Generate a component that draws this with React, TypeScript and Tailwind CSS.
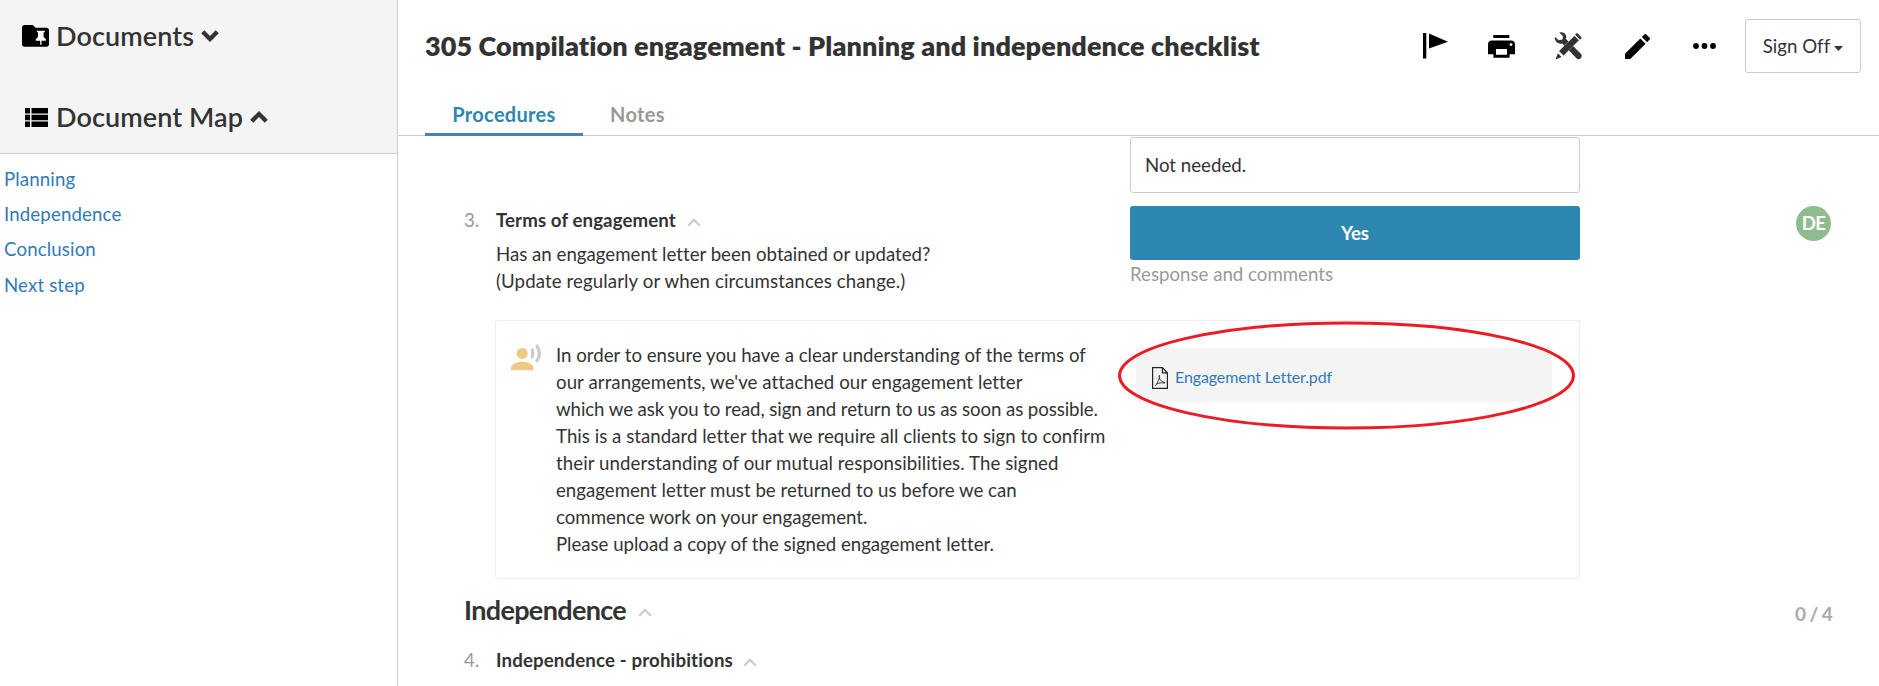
import React from "react";

const navItems = ["Planning", "Independence", "Conclusion", "Next step"];

const letterLines = [
  { text: "In order to ensure you have a clear understanding of the terms of", tracking: "" },
  { text: "our arrangements, we've attached our engagement letter", tracking: "tracking-[0.07px]" },
  { text: "which we ask you to read, sign and return to us as soon as possible.", tracking: "tracking-[-0.09px]" },
  { text: "This is a standard letter that we require all clients to sign to confirm", tracking: "tracking-[0.02px]" },
  { text: "their understanding of our mutual responsibilities. The signed", tracking: "tracking-[0.07px]" },
  { text: "engagement letter must be returned to us before we can", tracking: "" },
  { text: "commence work on your engagement.", tracking: "" },
  { text: "Please upload a copy of the signed engagement letter.", tracking: "tracking-[-0.03px]" },
];

function FolderPinIcon() {
  return (
    <svg className="block h-[22px] w-[27px]" viewBox="0 0 27 22">
      <path fill="#000" d="M2.7 0h8.1l2.7 2.7h10.8A2.7 2.7 0 0 1 27 5.4v13.7a2.7 2.7 0 0 1-2.7 2.7H2.7A2.7 2.7 0 0 1 0 19.1V2.7A2.7 2.7 0 0 1 2.7 0z" />
      <path fill="#fff" d="M14.8 5.8h8v1.400h-1.200v4.900l2.200 2v1.600h-4.300v4h-1.300v-4h-4.400v-1.600l2.200-2V7.200h-1.200z" />
    </svg>
  );
}

function ListIcon() {
  return (
    <svg className="block h-[19px] w-[23px]" viewBox="0 0 23 19" fill="#000">
      <path d="M0 0h5v5.400H0zM6.500 0H23v5.400H6.500zM0 6.800h5v5.400H0zM6.500 6.800H23v5.400H6.500zM0 13.600h5V19H0zM6.500 13.600H23V19H6.500z" />
    </svg>
  );
}

function BoldChevron({ up = false }: { up?: boolean }) {
  return (
    <svg className={up ? "block h-[12px] w-[18px] rotate-180" : "block h-[12px] w-[18px]"} viewBox="0 0 18 12">
      <path fill="#333" d="M3.300.200 9 5.900 14.700.200 17.800 3.300 9 11.900.2 3.300z" />
    </svg>
  );
}

function ThinChevron() {
  return (
    <svg className="mt-[3px] block h-[9px] w-[14px]" viewBox="0 0 14 9">
      <path d="M1.200 7.800 7 1.900l5.800 5.900" fill="none" stroke="#ccc" strokeWidth="2.200" />
    </svg>
  );
}

function FlagIcon() {
  return (
    <svg className="block h-[26px] w-[25px]" viewBox="0 0 25 26" fill="#000">
      <path d="M0 0h3.300v25.500H0zM6 0.500l19 8.200L6 15.500z" />
    </svg>
  );
}

function PrintIcon() {
  return (
    <svg className="block h-[23px] w-[27px]" viewBox="0 0 27 23">
      <path fill="#000" d="M5.300 0h16v3h-16zM4 5.600h19a4 4 0 0 1 4 4v9.600h-5.400v3.500H5.400v-3.500H0V9.600a4 4 0 0 1 4-4z" />
      <path fill="#fff" d="M8 14h11v5.800H8z" />
      <circle cx="23" cy="9.600" r="1.400" fill="#fff" />
    </svg>
  );
}

function ToolsIcon() {
  return (
    <svg className="block h-[28px] w-[27px]" viewBox="0 0 27 28" fill="#333">
      <path d="M4.300.6C6.500-.3 9 .2 10.300 2.200c1 1.500 1.200 3.300.6 4.900l15 14.700c1.200 1.300 1 3.200-.1 4.400-1.300 1.300-3.200 1.200-4.400 0L7.300 11.500C5 12.200 2.500 11.400 1.100 9.600.1 8.300-.3 6.500.2 5l3.600 3.300 3.600-.7.700-3.400z" />
      <path d="M19.500 3.700 24.100 8.300 8.500 23.700 3.900 19.100z" stroke="#fff" strokeWidth=".3" />
      <path d="M2.900 21.200 6.600 24.900 0.500 27.500zM22.800 1.600l3.300 3.300c.6.600.6 1.200.1 1.700l-1.100 1.100-5-5 1-1.100c.5-.5 1.200-.5 1.700 0z" />
    </svg>
  );
}

function PencilIcon() {
  return (
    <svg className="block h-[25px] w-[25px]" viewBox="3 3 18 18" fill="#000">
      <path d="M3 17.250V21h3.750L17.810 9.940l-3.750-3.750L3 17.250zM20.710 7.040a1 1 0 0 0 0-1.410l-2.340-2.340a1 1 0 0 0-1.410 0l-1.830 1.830 3.750 3.750 1.830-1.830z" />
    </svg>
  );
}

function MoreIcon() {
  return (
    <svg className="block h-[6px] w-[23px]" viewBox="0 0 23 6" fill="#000">
      <circle cx="3" cy="3" r="2.900" />
      <circle cx="11.500" cy="3" r="2.900" />
      <circle cx="20" cy="3" r="2.900" />
    </svg>
  );
}

function VoiceIcon() {
  return (
    <svg className="block h-[27px] w-[31px]" viewBox="0 0 31 27">
      <circle cx="11.200" cy="9.500" r="5.600" fill="#eccb85" />
      <path fill="#eccb85" d="M0 26.200v-2.700c0-3.700 7.400-5.700 11.200-5.700s11.200 2 11.200 5.700v2.700z" />
      <path fill="#ccc" d="M19.400 6.100 21.700 3.800c2.300 3.200 2.300 8.200 0 11.400l-2.300-2.400c1.100-2 1.100-4.600 0-6.700z" />
      <path fill="#ccc" d="M26.300 0c4.800 5.300 4.800 13.700 0 18.900L24 16.600c3.400-4.200 3.400-10.200 0-14.300z" />
    </svg>
  );
}

function PdfIcon() {
  return (
    <svg className="mt-[5px] block h-[22px] w-[16px]" viewBox="0 0 16 22" fill="none" stroke="#222" strokeWidth="1.200">
      <path d="M.6.600h9.800l5 5.200v15.600H.6zM10.400.600v5.200h5" />
      <path strokeWidth=".9" d="M3 18.800c1.500-1 3.300-4.400 4.200-7.600.3-1.200-.3-2.500 0-2.800.8-.4.300 2.200.3 2.800.7 2.300 2.900 4.100 5.500 4.200.6.500-.5.800-1 .6-2.500-.5-5 0-7.200.9" />
    </svg>
  );
}

export default function App() {
  return (
    <div className="flex h-[686px] w-[1879px] overflow-hidden bg-white font-['Lato',sans-serif] text-[18.67px] leading-[27px] text-[#333] [font-variant-ligatures:none]">
      <aside className="w-[398px] shrink-0 border-r border-[#ccc]">
        <div className="h-[154px] border-b border-[#ccc] bg-[#f4f4f4]">
          <div className="flex h-[72px] items-center pl-[22px]">
            <FolderPinIcon />
            <span className="-mt-[2px] ml-[7px] text-[27px] font-semibold tracking-[0.1px]">Documents</span>
            <span className="ml-[7px]"><BoldChevron /></span>
          </div>
          <div className="flex h-[90px] items-center pl-[25px]">
            <ListIcon />
            <span className="-mt-[2px] ml-[8px] text-[27px] font-semibold tracking-[0.1px]">Document Map</span>
            <span className="ml-[7px]"><BoldChevron up /></span>
          </div>
        </div>
        <nav className="flex flex-col gap-[8.200px] pl-1 pt-[12px] tracking-[0.14px] text-[#337ab7]">
          {navItems.map((item) => (
            <a key={item}>{item}</a>
          ))}
        </nav>
      </aside>

      <main className="min-w-0 flex-1">
        <header className="flex h-[136px] flex-col justify-between border-b border-[#ccc]">
          <div className="flex h-[92px] items-center pl-[27px] pr-[18px]">
            <h1 className="-mt-[2px] flex-1 text-[27px] font-extrabold tracking-[0.09px]">305 Compilation engagement - Planning and independence checklist</h1>
            <div className="flex items-center">
              <FlagIcon />
              <span className="ml-[40px]"><PrintIcon /></span>
              <span className="ml-[40px]"><ToolsIcon /></span>
              <span className="ml-[43px]"><PencilIcon /></span>
              <span className="ml-[43px]"><MoreIcon /></span>
            </div>
            <button className="ml-[29px] flex h-[54px] w-[116px] items-center justify-center gap-1 rounded-[3px] border border-[#ccc] pt-px">
              Sign Off
              <svg className="mt-[3px] h-[5px] w-[9px]" viewBox="0 0 9 5"><path d="M0 0h9L4.500 5z" fill="#333" /></svg>
            </button>
          </div>
          <div className="-mb-px flex pl-[27px] text-[20px] font-bold tracking-[0.3px]">
            <div className="h-[35px] w-[158px] border-b-[3px] border-[#4682b8] text-center text-[#2e87b0]">Procedures</div>
            <div className="pl-[27px] text-[#999]">Notes</div>
          </div>
        </header>

        <div className="relative pl-[66px]">
          <section className="flex">
            <div className="w-[32px] pt-[71px] text-[#999]">3.</div>
            <div className="w-[634px] pt-[71px]">
              <h2 className="flex items-center gap-[11px] font-bold tracking-[0.1px]">Terms of engagement <ThinChevron /></h2>
              <p className="mt-[7px]">Has an engagement letter been obtained or updated?<br /><span className="tracking-[0.1px]">(Update regularly or when circumstances change.)</span></p>
            </div>
            <div className="w-[450px] pt-px">
              <div className="flex h-[56px] items-center rounded-[3px] border border-[#ccc] pl-[14px]">Not needed.</div>
              <button className="mt-[13px] flex h-[54px] w-full items-center justify-center rounded-[3px] bg-[#2e87b0] font-bold text-white">Yes</button>
              <div className="mt-px text-[#999]">Response and comments</div>
            </div>
            <div className="ml-[216px] mt-[70px] flex size-[35px] items-center justify-center rounded-full bg-[#8fbc8f] pb-px font-bold tracking-[-0.8px] text-white">DE</div>
          </section>

          <section className="ml-[31px] mt-[25px] flex h-[259px] w-[1085px] rounded-[3px] border border-[#eee] pl-[15px]">
            <div className="mt-[23px]"><VoiceIcon /></div>
            <div className="ml-[14px] mt-[21px] w-[580px] whitespace-nowrap">
              {letterLines.map((line) => (
                <div key={line.text} className={line.tracking}>{line.text}</div>
              ))}
            </div>
            <div className="mt-[27px] flex h-[54px] w-[416px] items-center bg-[#f4f4f4] pl-[16px] text-[16px] tracking-[-0.12px] text-[#337ab7]">
              <PdfIcon />
              <span className="ml-[7px] mt-[2px]">Engagement Letter.pdf</span>
            </div>
          </section>

          <section className="mt-[15px] flex h-[30px] items-center">
            <h2 className="flex w-[1331px] items-center gap-[12px] text-[27px] font-bold tracking-[-0.65px]">Independence <span className="pt-1"><ThinChevron /></span></h2>
            <span className="mt-[8px] text-[19px] font-bold tracking-[-0.6px] text-[#aaa]">0 / 4</span>
          </section>
          <section className="mt-[23px] flex">
            <div className="w-[32px] text-[#999]">4.</div>
            <h2 className="flex items-center gap-[10px] font-bold tracking-[0.14px]">Independence - prohibitions <ThinChevron /></h2>
          </section>

          <svg className="pointer-events-none absolute left-[719px] top-[184px] h-[110px] w-[460px]" viewBox="0 0 460 110">
            <ellipse cx="229.500" cy="55.500" rx="227" ry="52.500" fill="none" stroke="#ed1c24" strokeWidth="3" />
          </svg>
        </div>
      </main>
    </div>
  );
}
